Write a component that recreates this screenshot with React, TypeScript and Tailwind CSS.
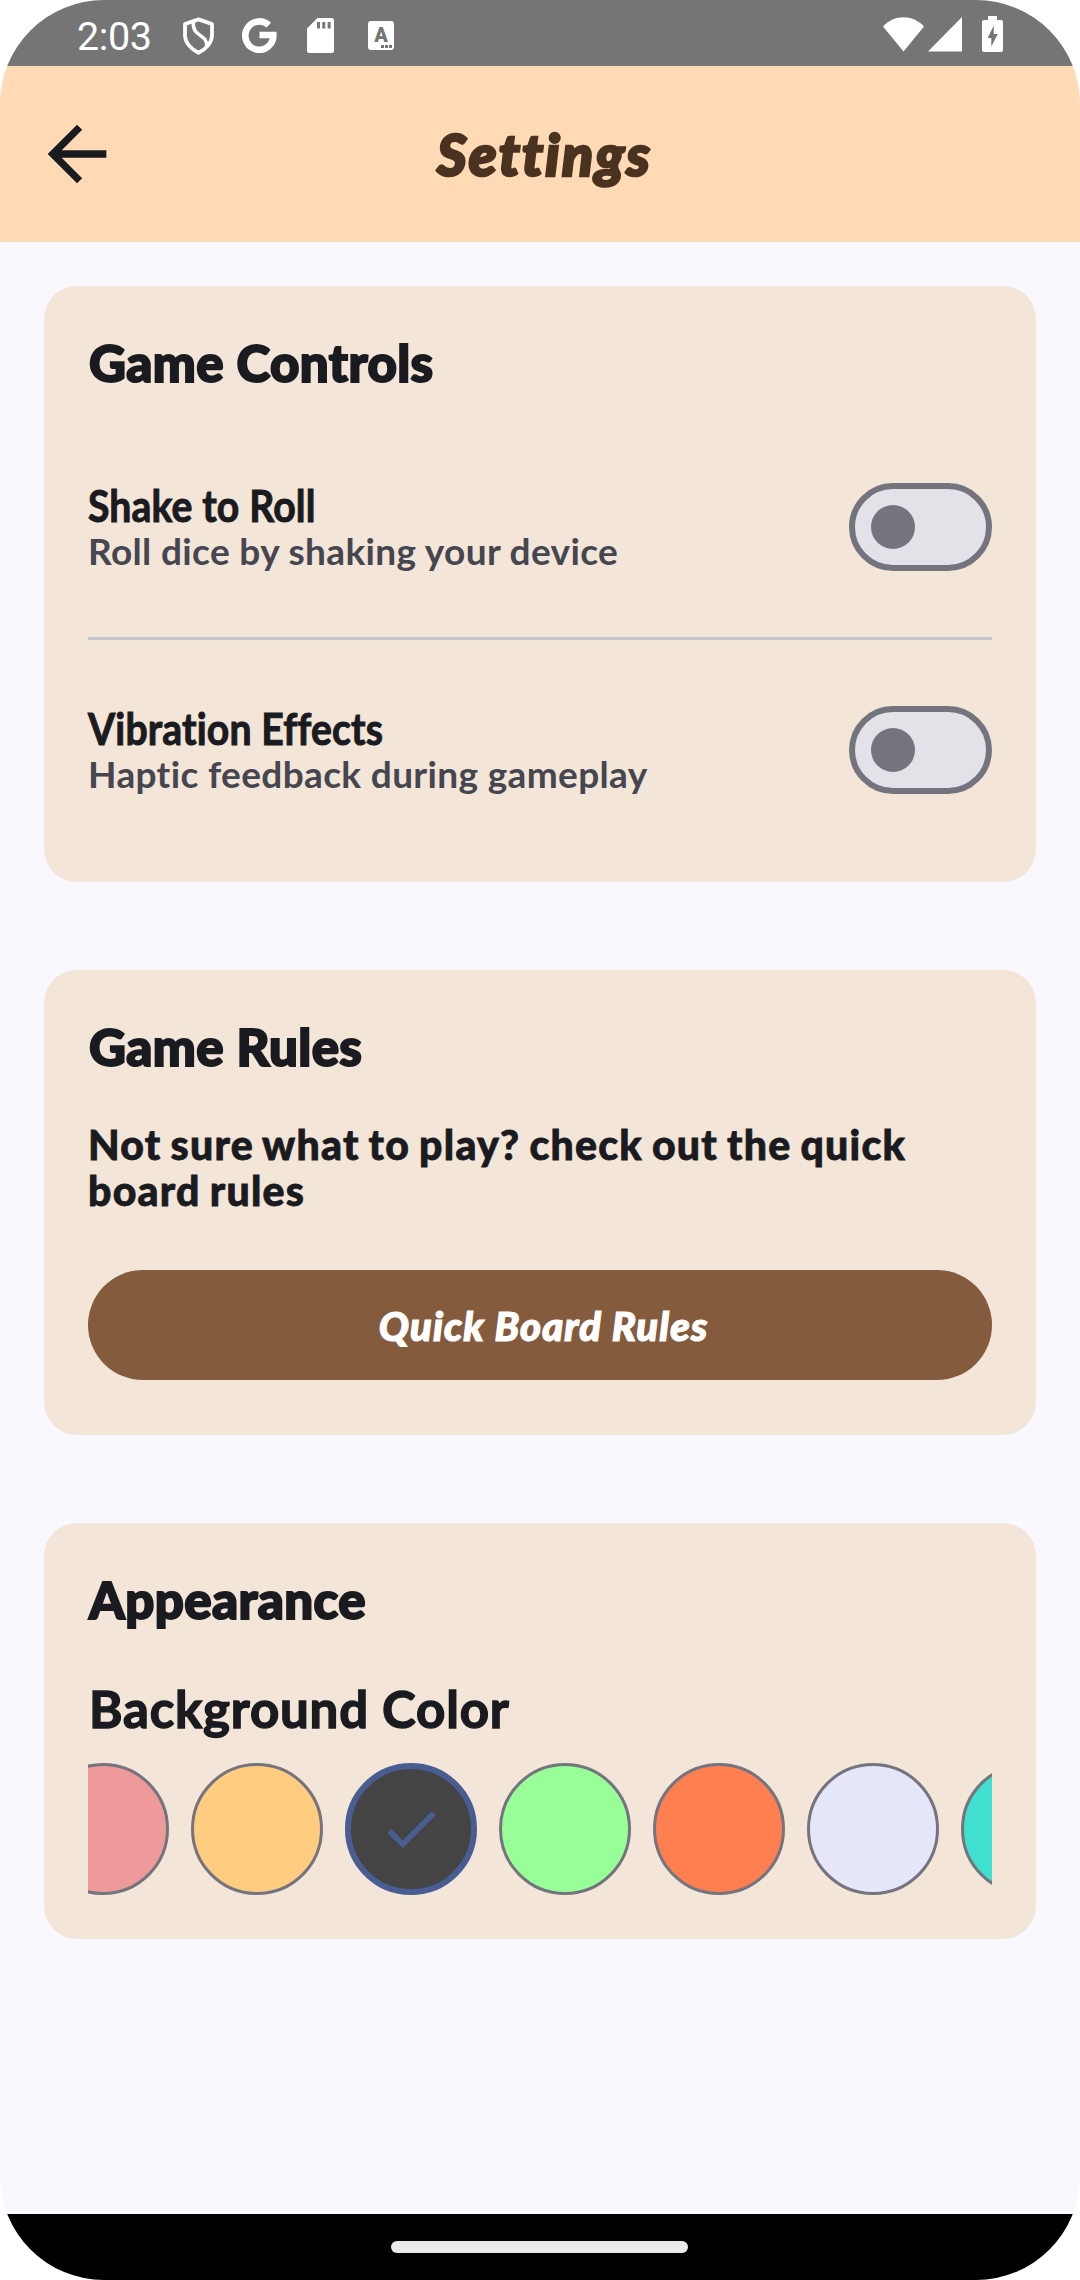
import type { ReactNode } from "react";

const swatches = [
  { id: "rose", fill: "bg-[#ef9a9a]" },
  { id: "apricot", fill: "bg-[#ffcc80]" },
  { id: "charcoal", fill: "bg-[#444444]", selected: true },
  { id: "mint", fill: "bg-[#98ff98]" },
  { id: "coral", fill: "bg-[#ff7f50]" },
  { id: "lavender", fill: "bg-[#e6e6fa]" },
  { id: "turquoise", fill: "bg-[#40e0d0]" },
];

function StatusBar() {
  return (
    <div className="flex h-[66px] shrink-0 items-center bg-[#757575] pr-[77px] pl-[77px] text-white">
      <span className="w-[106px] pt-[7px] font-['Roboto',sans-serif] text-[39.5px] leading-[66px] tracking-[-0.4px]">2:03</span>
      <svg className="mt-[5px] h-[38px] w-[31px]" viewBox="0 0 31 38" fill="none" stroke="currentColor" strokeWidth="3.8" strokeLinejoin="round">
        <path d="M15.5 2.4 L29 7 V18 C29 26 22.5 32.5 15.5 35.8 C8.5 32.5 2 26 2 18 V7 Z" />
        <path d="M10.5 5 C8.500 20 25 17 23.500 29" strokeWidth="3.4" />
      </svg>
      <svg className="mt-[4px] ml-[28px] h-[36px] w-[35px]" viewBox="0 0 35 36" fill="none" stroke="currentColor" strokeWidth="6.6">
        <path d="M26.8 8.2 A14 14.2 0 1 0 31.3 18 H17.5" />
      </svg>
      <svg className="mt-[4px] ml-[30px] h-[35px] w-[27px]" viewBox="0 0 27 35">
        <path d="M10.5 0 H24.5 Q27 0 27 2.5 V32.5 Q27 35 24.5 35 H2.5 Q0 35 0 32.5 V10.5 Z" fill="currentColor" />
        <path d="M10 4h3v6.5h-3z M15.3 4h3v6.5h-3z M20.6 4h3v6.5h-3z" fill="#757575" />
      </svg>
      <div className="mt-[5px] ml-[34px] flex h-[29px] w-[26px] flex-col items-center rounded-[3px] bg-white pt-[6px] text-[#757575]">
        <span className="font-['Roboto',sans-serif] text-[20px] leading-[16px] font-black">A</span>
        <span className="mt-[2px] mr-[2px] flex gap-[1px] self-end">
          <i className="size-[3px] bg-[#757575]" />
          <i className="size-[3px] bg-[#757575]" />
          <i className="size-[3px] bg-[#757575]" />
        </span>
      </div>
      <div className="ml-auto flex items-center">
        <svg className="mt-[2px] h-[35px] w-[41px]" viewBox="0 0 41 35" fill="currentColor">
          <path d="M20.5 34.5 L0 9.5 C11 -2.9 30 -2.9 41 9.5 Z" />
        </svg>
        <svg className="mt-[3px] ml-[4px] h-[35px] w-[34px]" viewBox="0 0 34 35" fill="currentColor">
          <path d="M34 0 V34.5 H0 Z" />
        </svg>
        <svg className="mt-[2px] ml-[20px] h-[36px] w-[21px]" viewBox="0 0 21 36">
          <path d="M6 0 H15 V4 H19 Q21 4 21 6 V34 Q21 36 19 36 H2 Q0 36 0 34 V6 Q0 4 2 4 H6 Z" fill="currentColor" />
          <path d="M11.8 9.5 V18 H15.8 L9.3 30.5 V22 H5.6 Z" fill="#757575" />
        </svg>
      </div>
    </div>
  );
}

function Header() {
  return (
    <header className="grid h-[176px] shrink-0 grid-cols-[1fr_auto_1fr] items-center bg-[#ffdab4] px-[33px]">
      <button aria-label="Back" className="size-[88px]">
        <svg viewBox="0 0 24 24" className="size-[88px] fill-[#1a1b20]">
          <path d="M20 11H7.83l5.59-5.59L12 4l-8 8 8 8 1.41-1.41L7.83 13H20v-2z" />
        </svg>
      </button>
      <h1 className="pl-[9px] text-[57px] leading-[70px] font-black tracking-[2.2px] text-[#4a3220] italic [-webkit-text-stroke:2.6px]">Settings</h1>
    </header>
  );
}

function Card({ title, className, children }: { title: string; className: string; children: ReactNode }) {
  return (
    <section className={`rounded-[33px] bg-[#f3e5d7] px-[44px] pt-[44px] ${className}`}>
      <h2 className="pt-[1px] pl-[1px] text-[51px] leading-[63px] font-black tracking-[0.4px] [-webkit-text-stroke:2px]">{title}</h2>
      {children}
    </section>
  );
}

function ToggleRow({ title, detail }: { title: string; detail: string }) {
  return (
    <div className="flex h-[220px] items-center justify-between">
      <div className="pt-[3px] whitespace-nowrap">
        <div className="origin-left scale-x-[0.89] text-[44px] leading-[45px] font-bold tracking-[0.15px] [-webkit-text-stroke:1px] [font-variant-ligatures:none]">{title}</div>
        <div className="text-[37px] leading-[46px] font-bold tracking-[0.35px] text-[#45464f] [font-variant-ligatures:none]">{detail}</div>
      </div>
      <button role="switch" aria-checked="false" aria-label={title} className="flex h-[88px] w-[143px] items-center rounded-full border-[6px] border-[#74747e] bg-[#e3e2e8] pl-[16px]">
        <span className="size-[44px] rounded-full bg-[#74747e]" />
      </button>
    </div>
  );
}

export default function App() {
  return (
    <div className="bg-white">
      <div className="flex h-[2280px] w-[1080px] flex-col overflow-hidden rounded-[104px] bg-[#f9f8ff] font-['Lato',sans-serif] text-[#1a1b20]">
        <StatusBar />
        <Header />
        <main className="flex flex-1 flex-col gap-[88px] px-[44px] pt-[44px]">
          <Card title="Game Controls" className="pb-[22px]">
            <div className="mt-[23px]">
              <ToggleRow title="Shake to Roll" detail="Roll dice by shaking your device" />
              <div className="h-[3px] bg-[#c5c6d0]" />
              <ToggleRow title="Vibration Effects" detail="Haptic feedback during gameplay" />
            </div>
          </Card>
          <Card title="Game Rules" className="pb-[55px]">
            <p className="mt-[44px] text-[41px] leading-[46px] font-black tracking-[1.25px] [-webkit-text-stroke:0.8px] [word-spacing:-2px]">
              Not sure what to play? check out the quick
              <br />
              board rules
            </p>
            <button className="mt-[56px] flex h-[110px] w-full items-center justify-center rounded-full bg-[#845b3d] pt-[1px] pl-[7px] text-[40px] font-black tracking-[1.1px] text-white italic [-webkit-text-stroke:1.2px]">
              Quick Board Rules
            </button>
          </Card>
          <Card title="Appearance" className="pb-[44px]">
            <h3 className="mt-[46px] pl-[1px] text-[51px] leading-[64px] font-bold tracking-[0.8px] [-webkit-text-stroke:1.4px]">Background Color</h3>
            <div className="mt-[22px] flex overflow-hidden">
              <div className="-ml-[51px] flex shrink-0 gap-[22px]">
                {swatches.map((s) => (
                  <div
                    key={s.id}
                    className={`flex size-[132px] shrink-0 items-center justify-center rounded-full ${s.fill} ${
                      s.selected ? "border-[6px] border-[#495d92]" : "border-[3px] border-[#74747e]"
                    }`}
                  >
                    {s.selected && (
                      <svg viewBox="0 0 24 24" className="size-[66px] fill-[#495d92]">
                        <path d="M9 16.17L4.83 12l-1.42 1.41L9 19 21 7l-1.41-1.41z" />
                      </svg>
                    )}
                  </div>
                ))}
              </div>
            </div>
          </Card>
        </main>
        <div className="flex h-[66px] shrink-0 items-center justify-center bg-black pr-[1px]">
          <div className="h-[12px] w-[297px] rounded-full bg-[#ebebeb]" />
        </div>
      </div>
    </div>
  );
}
